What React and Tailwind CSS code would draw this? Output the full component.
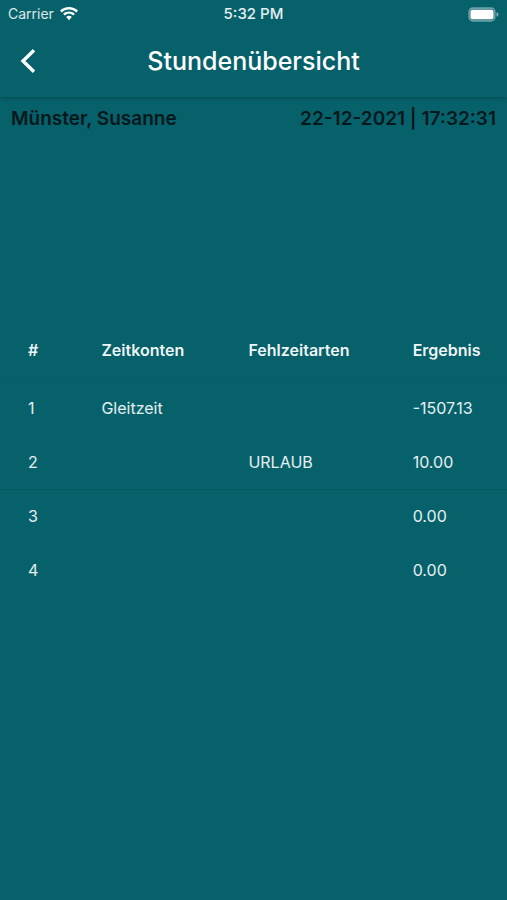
const COLUMNS = ['#', 'Zeitkonten', 'Fehlzeitarten', 'Ergebnis'];

const ROWS = [
  { id: 1, account: 'Gleitzeit', absence: '', result: '-1507.13' },
  { id: 2, account: '', absence: 'URLAUB', result: '10.00' },
  { id: 3, account: '', absence: '', result: '0.00' },
  { id: 4, account: '', absence: '', result: '0.00' },
];

function WifiIcon() {
  return (
    <svg viewBox="0 0 18 14" className="h-3.5 w-[18px]" fill="currentColor" aria-hidden="true">
      <path d="M9 0C5.600 0 2.400 1.300 0 3.600L1.700 5.400C3.700 3.500 6.200 2.500 9 2.500S14.300 3.500 16.300 5.400L18 3.600C15.600 1.300 12.400 0 9 0Z" />
      <path d="M9 4.400C6.800 4.400 4.700 5.200 3.100 6.800L4.800 8.500C5.900 7.400 7.400 6.800 9 6.800S12.100 7.400 13.200 8.500L14.900 6.800C13.300 5.200 11.200 4.400 9 4.400Z" />
      <path d="M9 8.800C7.900 8.800 6.900 9.200 6.200 9.900L9 13.200L11.800 9.900C11.100 9.200 10.100 8.800 9 8.800Z" />
    </svg>
  );
}

function BatteryIcon() {
  return (
    <svg viewBox="0 0 31 15" className="h-[15px] w-[31px]" aria-hidden="true">
      <rect x="1" y="1" width="26" height="13" rx="4" fill="#fff" fillOpacity="0.150" stroke="#fff" strokeOpacity="0.4" strokeWidth="1.300" />
      <rect x="2.500" y="2.800" width="23" height="9.400" rx="2" fill="#fff" />
      <path d="M28.500 5.200C29.800 5.700 30.500 6.500 30.500 7.500S29.800 9.300 28.500 9.800Z" fill="#fff" fillOpacity="0.5" />
    </svg>
  );
}

function StatusBar() {
  return (
    <div className="grid h-7 grid-cols-3 items-center pl-2 pr-2 text-sm">
      <div className="flex items-center gap-1.5 text-white/85">
        <span>Carrier</span>
        <span className="text-white">
          <WifiIcon />
        </span>
      </div>
      <span className="text-center text-[15px] font-medium text-white/90">5:32 PM</span>
      <div className="flex justify-end">
        <BatteryIcon />
      </div>
    </div>
  );
}

function AppBar({ title }) {
  return (
    <header className="bg-[#07616b] shadow-[0_2px_4px_rgba(0,0,0,0.2)]">
      <StatusBar />
      <div className="grid h-[69px] grid-cols-[56px_1fr_56px] items-center pb-1">
        <button type="button" aria-label="Zurück" className="flex h-12 w-14 items-center justify-center">
          <svg viewBox="0 0 16 26" className="h-[26px] w-4" fill="none" stroke="#fff" strokeWidth="3.400" aria-hidden="true">
            <path d="M14 2.300L3 13L14 23.700" />
          </svg>
        </button>
        <h1 className="text-center text-[25px] leading-8 font-medium">{title}</h1>
      </div>
    </header>
  );
}

export default function App() {
  return (
    <div className="flex min-h-screen flex-col bg-[#07616b] font-['Inter',sans-serif] text-white">
      <AppBar title="Stundenübersicht" />

      <main className="flex-1">
        <div className="flex items-center justify-between px-[11px] pt-2.5 text-[19px] leading-6 font-semibold text-[#04181b]">
          <span>Münster, Susanne</span>
          <span>22-12-2021 | 17:32:31</span>
        </div>

        <table className="mt-[188px] w-full table-fixed border-collapse text-left text-base">
          <colgroup>
            <col className="w-[20%]" />
            <col className="w-[29%]" />
            <col className="w-[32%]" />
            <col className="w-[19%]" />
          </colgroup>
          <thead>
            <tr className="h-[62px] border-b border-[#075e68]">
              {COLUMNS.map((column) => (
                <th key={column} scope="col" className="p-0 font-semibold text-white/95 first:pl-7 last:pl-0.5">
                  {column}
                </th>
              ))}
            </tr>
          </thead>
          <tbody className="text-white/90">
            {ROWS.map((row) => (
              <tr key={row.id} className="h-[54px] nth-2:border-b nth-2:border-[#065660]">
                <td className="p-0 pl-7">{row.id}</td>
                <td className="p-0">{row.account}</td>
                <td className="p-0">{row.absence}</td>
                <td className="p-0 pl-0.5">{row.result}</td>
              </tr>
            ))}
          </tbody>
        </table>
      </main>
    </div>
  );
}
